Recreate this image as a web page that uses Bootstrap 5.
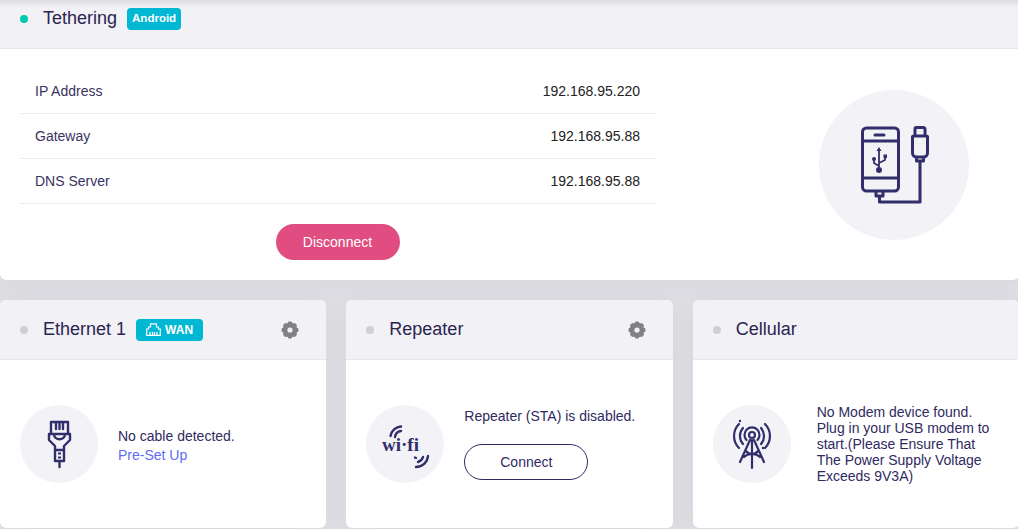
<!DOCTYPE html>
<html lang="en">
<head>
    <meta charset="UTF-8">
    <title>Network</title>
    <link href="https://cdn.jsdelivr.net/npm/bootstrap@5.3.3/dist/css/bootstrap.min.css" rel="stylesheet">
    <style>
        html, body { height: 529px; overflow: hidden; }
        body { background: #e0e0e5; font-family: "Liberation Sans", Arial, sans-serif; font-size: 14px; color: #2f2a5f; }
        .top-fade { position: absolute; top: 0; left: 0; right: 0; height: 8px; background: linear-gradient(#dcdce1, rgba(241,241,246,0)); z-index: 5; }
        .page-wrap { width: 1019px; margin-top: -11px; }
        .net-card { border: 0; border-radius: 6px; background: #fff; box-shadow: 0 4px 24px rgba(60,60,90,.07); overflow: hidden; }
        .net-head { height: 60px; background: #f1f1f6; border-bottom: 1px solid #e6e6ec; padding: 0 20px; display: flex; align-items: center; color: #2a2550; font-size: 18px; }
        .dot { width: 8px; height: 8px; border-radius: 50%; background: #cfcfd6; margin: 0 15px 0 0; flex: none; }
        .dot-on { background: #00c9b1; }
        .tag { background: #00b7d4; color: #fff; font-size: 11.5px; font-weight: 700; height: 22px; border-radius: 4px; padding: 0 5px; margin-left: 10px; display: inline-flex; align-items: center; gap: 4px; }
        .tag-wan { margin-left: 10px; padding: 0 10px; font-size: 12px; }
        .gear { margin-left: auto; margin-right: 7px; }
        .info-col { width: 635px; padding-top: 20px; }
        .info-row { height: 45px; border-bottom: 1px solid #e9e9ee; padding: 0 15px; color: #39335f; }
        .info-row b { font-weight: 400; color: #222; }
        .disc-btn { background: #e14d80; border: 0; color: #fff; width: 124px; height: 36px; border-radius: 18px; font-size: 14px; margin-top: 20px; padding: 0; }
        .disc-btn:hover { background: #e14d80; color: #fff; }
        .big-circle { width: 150px; height: 150px; border-radius: 50%; background: #f2f2f7; margin: 41px 50px 0 0; }
        .top-body { height: 231px; padding: 0 0 0 20px; }
        .card-grid { display: grid; grid-template-columns: repeat(3, 1fr); gap: 20px; margin-top: 20px; }
        .low-body { height: 168px; padding: 0 20px; display: flex; align-items: center; }
        .sm-circle { width: 78px; height: 78px; border-radius: 50%; background: #f2f2f7; flex: none; margin-right: 20px; }
        .pre-link { color: #5d6cf2; text-decoration: none; }
        .eth-text { line-height: 19px; padding-top: 3px; }
        .conn-btn { width: 124px; height: 36px; border: 1px solid #2f2a5f; border-radius: 18px; color: #2f2a5f; font-size: 14px; background: #fff; padding: 0; margin-top: 20px; }
        .sta-text { line-height: 16px; }
        .modem-text { line-height: 16px; margin-left: 6px; width: 185px; }
        .ink { fill: none; stroke: #312e6b; stroke-width: 3; stroke-linecap: round; stroke-linejoin: round; }
        .ink-fill { fill: #312e6b; }
        .ink-thin { fill: none; stroke: #312e6b; stroke-width: 1.8; stroke-linecap: round; stroke-linejoin: round; }
        .ink-tower { fill: none; stroke: #312e6b; stroke-width: 2.2; stroke-linecap: round; stroke-linejoin: round; }
        .ink-low { stroke-width: 2.4; }
        .wifi-word { font-family: "Liberation Serif", serif; font-weight: 700; font-size: 19px; fill: #312e6b; }
    </style>
</head>
<body>
    <div class="top-fade"></div>
    <div class="page-wrap">
        <!-- Tethering -->
        <div class="card net-card">
            <div class="net-head">
                <span class="dot dot-on"></span>
                <span>Tethering</span>
                <span class="tag">Android</span>
            </div>
            <div class="top-body d-flex justify-content-between">
                <div class="info-col">
                    <div class="info-row d-flex justify-content-between align-items-center"><span>IP Address</span><b>192.168.95.220</b></div>
                    <div class="info-row d-flex justify-content-between align-items-center"><span>Gateway</span><b>192.168.95.88</b></div>
                    <div class="info-row d-flex justify-content-between align-items-center"><span>DNS Server</span><b>192.168.95.88</b></div>
                    <div class="text-center"><button class="btn disc-btn">Disconnect</button></div>
                </div>
                <div class="big-circle">
                    <svg width="150" height="150" viewBox="0 0 150 150">
                        <rect class="ink" x="43.500" y="38" width="36" height="63" rx="4"/>
                        <path class="ink" d="M44 51H79M44 88H79M56 45H65M57 102v4h7v-4M60.500 107v5h40.500V72"/>
                        <path class="ink" d="M94.500 46h13a1 1 0 0 1 1 1v16a4 4 0 0 1-4 4h-7a4 4 0 0 1-4-4V47a1 1 0 0 1 1-1zM96 45v-6a1.500 1.500 0 0 1 1.500-1.500h7a1.500 1.500 0 0 1 1.500 1.500v6M97.500 67v4h7v-4"/>
                        <path class="ink-thin" d="M60 60V80M60 76l-5-3v-3M60 73l6-3v-3"/>
                        <path class="ink-fill" d="M60 57l2.500 4h-5z"/>
                        <circle class="ink-fill" cx="60" cy="80" r="3"/>
                        <circle class="ink-fill" cx="55" cy="69" r="2"/>
                        <rect class="ink-fill" x="64.500" y="64.500" width="3.500" height="3.500"/>
                    </svg>
                </div>
            </div>
        </div>

        <div class="card-grid">
            <!-- Ethernet -->
            <div class="card net-card">
                <div class="net-head">
                    <span class="dot"></span>
                    <span>Ethernet 1</span>
                    <span class="tag tag-wan">
                        <svg width="15" height="13" viewBox="0 0 15 13"><path d="M.7 12.300V6H2.500V4H4.500V.8H10.500V4H12.500V6H14.300V12.300Z M4 12V9M6.500 12V9M8.500 12V9M11 12V9" fill="none" stroke="#fff" stroke-width="1.200"/></svg>
                        WAN
                    </span>
                    <svg class="gear" width="18" height="18" viewBox="0 0 18 18"><g fill="#808085"><circle cx="9" cy="9" r="5.400" fill="none" stroke="#808085" stroke-width="4"/><rect x="7" y=".6" width="4" height="16.800" rx=".8"/><rect x="7" y=".6" width="4" height="16.800" rx=".8" transform="rotate(45 9 9)"/><rect x="7" y=".6" width="4" height="16.800" rx=".8" transform="rotate(90 9 9)"/><rect x="7" y=".6" width="4" height="16.800" rx=".8" transform="rotate(135 9 9)"/></g><circle cx="9" cy="9" r="2.600" fill="#f1f1f6"/></svg>
                </div>
                <div class="low-body">
                    <div class="sm-circle">
                        <svg width="78" height="78" viewBox="0 0 78 78">
                            <path class="ink ink-low" d="M31 28V17H48V28M36 18V24M39.500 18V24M43 18V24M29 29H50V35L44 41V45H35V41L29 35ZM34 29C34 36 45 36 45 29M35 45V56H44V45M39.500 56V62"/>
                            <path class="ink-fill" d="M38 47.500h3v2h-3zM38 51.500h3v2h-3z"/>
                        </svg>
                    </div>
                    <div class="eth-text">No cable detected.<br><a class="pre-link" href="#">Pre-Set Up</a></div>
                </div>
            </div>

            <!-- Repeater -->
            <div class="card net-card">
                <div class="net-head">
                    <span class="dot"></span>
                    <span>Repeater</span>
                    <svg class="gear" width="18" height="18" viewBox="0 0 18 18"><g fill="#808085"><circle cx="9" cy="9" r="5.400" fill="none" stroke="#808085" stroke-width="4"/><rect x="7" y=".6" width="4" height="16.800" rx=".8"/><rect x="7" y=".6" width="4" height="16.800" rx=".8" transform="rotate(45 9 9)"/><rect x="7" y=".6" width="4" height="16.800" rx=".8" transform="rotate(90 9 9)"/><rect x="7" y=".6" width="4" height="16.800" rx=".8" transform="rotate(135 9 9)"/></g><circle cx="9" cy="9" r="2.600" fill="#f1f1f6"/></svg>
                </div>
                <div class="low-body">
                    <div class="sm-circle">
                        <svg width="78" height="78" viewBox="0 0 78 78">
                            <path class="ink ink-low" d="M29 32A7 7 0 0 1 35 26M24.500 31A11.500 11.500 0 0 1 35 21.500"/>
                            <path class="ink ink-low" d="M52 57A7 7 0 0 0 57 52M50 62A12 12 0 0 0 62 51M49 52.500L50 53"/>
                            <text class="wifi-word" x="16" y="46">wi·fi</text>
                        </svg>
                    </div>
                    <div class="sta-text">
                        <div>Repeater (STA) is disabled.</div>
                        <button class="btn conn-btn">Connect</button>
                    </div>
                </div>
            </div>

            <!-- Cellular -->
            <div class="card net-card">
                <div class="net-head">
                    <span class="dot"></span>
                    <span>Cellular</span>
                </div>
                <div class="low-body">
                    <div class="sm-circle">
                        <svg width="78" height="78" viewBox="0 0 78 78">
                            <circle class="ink-tower" cx="39" cy="30" r="3"/>
                            <path class="ink-tower" d="M33.500 35A7.500 7.500 0 1 1 44.500 35"/>
                            <path class="ink-tower" d="M30 23A12 12 0 0 0 30 39M48 23A12 12 0 0 1 48 39"/>
                            <path class="ink-tower" d="M26 19A17 17 0 0 0 26 43M52 19A17 17 0 0 1 52 43"/>
                            <path class="ink-tower" d="M37 35L27 57M41 35L51 57M39 35V63M33 46C36 50 42 50 45 46M31 52C35 48 43 48 47 52"/>
                            <circle class="ink-fill" cx="27" cy="16" r="1.200"/>
                            <circle class="ink-fill" cx="50" cy="43" r="1.200"/>
                        </svg>
                    </div>
                    <div class="modem-text">No Modem device found. Plug in your USB modem to start.(Please Ensure That The Power Supply Voltage Exceeds 9V3A)</div>
                </div>
            </div>
        </div>
    </div>
    <script src="https://cdn.jsdelivr.net/npm/bootstrap@5.3.3/dist/js/bootstrap.bundle.min.js"></script>
</body>
</html>
